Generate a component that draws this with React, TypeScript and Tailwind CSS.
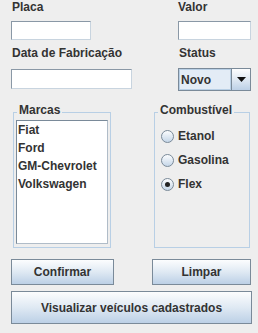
export default function App() {
  const label = 'text-[12px] leading-[15px] font-bold text-[#333333]'
  const field = 'bg-white border border-[#8a98a6] border-r-[#c8d4df] border-b-[#c8d4df]'
  const button =
    'flex items-center justify-center border border-[#7a8a99] bg-gradient-to-b from-[#fcfdfe] via-[#dfe9f3] to-[#bcd0e6] text-[12px] font-bold text-[#333333]'

  return (
    <div className="w-[258px] h-[333px] bg-[#eeeeee] overflow-hidden font-['Liberation_Sans',Arial,sans-serif]">
      {/* first row */}
      <div className="flex">
        <div className="w-[178px] pl-[11px]">
          <div className={`${label} pl-[1px]`}>Placa</div>
          <div className={`${field} mt-[6px] w-[80px] h-[19px]`} />
        </div>
        <div>
          <div className={label}>Valor</div>
          <div className={`${field} mt-[6px] w-[73px] h-[19px]`} />
        </div>
      </div>

      {/* second row */}
      <div className="flex mt-[6px]">
        <div className="w-[178px] pl-[11px]">
          <div className={`${label} pl-[1px]`}>Data de Fabricação</div>
          <div className={`${field} mt-[8px] w-[121px] h-[20px]`} />
        </div>
        <div>
          <div className={`${label} pl-[1px]`}>Status</div>
          <div className="mt-[7px] w-[73px] h-[23px] flex border border-[#7a8a99]">
            <div className="flex-1 flex items-center pl-[1px] border border-[#b8cfe5] bg-[#e3ecf6] text-[12px] font-bold text-[#333333]">
              Novo
            </div>
            <div className="w-[19px] flex items-center justify-center border-l border-[#7a8a99] bg-gradient-to-b from-[#fcfdfe] via-[#dfe9f3] to-[#bcd0e6]">
              <svg width="9" height="5" viewBox="0 0 9 5">
                <path d="M0 0H9L4.5 5Z" fill="#111111" />
              </svg>
            </div>
          </div>
        </div>
      </div>

      {/* panels */}
      <div className="flex mt-[21px]">
        <div className="relative ml-[13px] w-[98px] h-[136px] border border-[#b8cfe5]">
          <span className={`absolute left-[3px] top-[-10px] px-[2px] bg-[#eeeeee] ${label}`}>Marcas</span>
          <div className="ml-[2px] mt-[7px] w-[92px] h-[124px] bg-white border border-[#7a8a99] border-r-[#b0bcc8] border-b-[#b0bcc8]">
            <ul className="pl-[1px] text-[12px] leading-[18px] font-bold text-[#333333]">
              <li>Fiat</li>
              <li>Ford</li>
              <li>GM-Chevrolet</li>
              <li>Volkswagen</li>
            </ul>
          </div>
        </div>
        <div className="relative ml-[43px] w-[96px] h-[136px] border border-[#b8cfe5]">
          <span className={`absolute left-[3px] top-[-10px] px-[2px] bg-[#eeeeee] ${label}`}>Combustível</span>
          <div className="pt-[11px] pl-[6px]">
            {['Etanol', 'Gasolina', 'Flex'].map((name) => (
              <div key={name} className="h-[24px] flex items-center gap-[4px]">
                <div className="w-[13px] h-[13px] rounded-full border border-[#7a8a99] bg-gradient-to-b from-[#fcfdfe] to-[#c5d6e8] flex items-center justify-center">
                  {name === 'Flex' && <div className="w-[5px] h-[5px] rounded-full bg-[#222222]" />}
                </div>
                <span className="text-[12px] font-bold text-[#333333]">{name}</span>
              </div>
            ))}
          </div>
        </div>
      </div>

      {/* buttons */}
      <div className="flex mt-[11px] pl-[11px]">
        <div className={`${button} w-[103px] h-[26px]`}>Confirmar</div>
        <div className={`${button} ml-[38px] w-[99px] h-[26px]`}>Limpar</div>
      </div>
      <div className={`${button} ml-[11px] mt-[6px] w-[241px] h-[33px]`}>Visualizar veículos cadastrados</div>
    </div>
  )
}
